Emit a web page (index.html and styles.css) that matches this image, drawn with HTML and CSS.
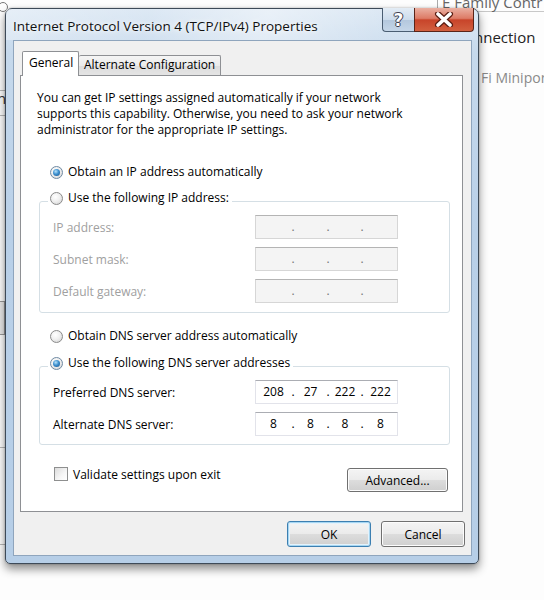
FILE: index.html
```html
<!DOCTYPE html>
<html lang="en">
<head>
    <meta charset="UTF-8">
    <title>Internet Protocol Version 4 (TCP/IPv4) Properties</title>
    <link rel="stylesheet" href="styles.css">
</head>
<body>
<div class="desktop">
    <div class="back-left">
        <span class="bl-c"></span>
        <span class="bl-line l1"></span>
        <span class="bl-txt">n</span>
        <span class="bl-line l2"></span>
        <span class="bl-box"></span>
        <span class="bl-line l3"></span>
        <span class="bl-line l4"></span>
    </div>
    <div class="back-right">
        <div class="bk-top">E Family Contr</div>
        <div class="bk-conn">nnection</div>
        <div class="bk-mini">Fi Minipor</div>
    </div>

    <div class="dialog">
        <div class="titlebar">
            <span class="title">Internet Protocol Version 4 (TCP/IPv4) Properties</span>
            <div class="caption-btns">
                <span class="cbtn help">?</span>
                <span class="cbtn close">
                    <svg width="20" height="15" viewBox="0 0 20 15">
                        <path d="M4 2 L16 13 M16 2 L4 13" stroke="#5a1d12" stroke-width="6" stroke-linecap="round"/>
                        <path d="M4 2 L16 13 M16 2 L4 13" stroke="#fff" stroke-width="3.6" stroke-linecap="round"/>
                    </svg>
                </span>
            </div>
        </div>

        <div class="client">
            <div class="tabs">
                <span class="tab active">General</span>
                <span class="tab">Alternate Configuration</span>
            </div>

            <div class="panel">
                <p class="intro">You can get IP settings assigned automatically if your network supports this capability. Otherwise, you need to ask your network administrator for the appropriate IP settings.</p>

                <div class="opt first"><span class="radio on"></span>Obtain an IP address automatically</div>

                <fieldset class="group off">
                    <legend class="opt"><span class="radio"></span>Use the following IP address:</legend>
                    <div class="field">
                        <span class="lbl">IP address:</span>
                        <span class="ip"><i class="s1"></i><b>.</b><i class="s2"></i><b>.</b><i class="s3"></i><b>.</b><i class="s4"></i></span>
                    </div>
                    <div class="field">
                        <span class="lbl">Subnet mask:</span>
                        <span class="ip"><i class="s1"></i><b>.</b><i class="s2"></i><b>.</b><i class="s3"></i><b>.</b><i class="s4"></i></span>
                    </div>
                    <div class="field">
                        <span class="lbl">Default gateway:</span>
                        <span class="ip"><i class="s1"></i><b>.</b><i class="s2"></i><b>.</b><i class="s3"></i><b>.</b><i class="s4"></i></span>
                    </div>
                </fieldset>

                <div class="opt dns-auto"><span class="radio"></span>Obtain DNS server address automatically</div>

                <fieldset class="group dns">
                    <legend class="opt"><span class="radio on"></span>Use the following DNS server addresses</legend>
                    <div class="field">
                        <span class="lbl">Preferred DNS server:</span>
                        <span class="ip"><i class="s1">208</i><b>.</b><i class="s2">27</i><b>.</b><i class="s3">222</i><b>.</b><i class="s4">222</i></span>
                    </div>
                    <div class="field">
                        <span class="lbl">Alternate DNS server:</span>
                        <span class="ip"><i class="s1">8</i><b>.</b><i class="s2">8</i><b>.</b><i class="s3">8</i><b>.</b><i class="s4">8</i></span>
                    </div>
                </fieldset>

                <div class="bottom-row">
                    <label class="check"><span class="box"></span>Validate settings upon exit</label>
                    <span class="btn advanced">Advanced...</span>
                </div>
            </div>

            <div class="footer">
                <span class="btn ok">OK</span>
                <span class="btn">Cancel</span>
            </div>
        </div>
    </div>
</div>
</body>
</html>
```

FILE: styles.css
```css
body {
    margin: 0;
    background: #fff;
    font-family: 'Open Sans', 'Noto Sans', sans-serif;
    font-size: 12px;
    color: #000;
}
.desktop {
    position: relative;
    width: 544px;
    height: 600px;
    overflow: hidden;
    background: #fdfdfd;
}

/* window behind the dialog */
.back-left {
    position: absolute;
    left: 0;
    top: 0;
    width: 10px;
    height: 600px;
}
.bl-c {
    display: block;
    width: 8px;
    height: 8px;
    margin: 2px 0 0 -2px;
    border: 1px solid #777;
    border-radius: 50%;
}
.bl-line {
    display: block;
    height: 1px;
    background: #b8b8b8;
}
.bl-line.l1 { margin-top: 78px; }
.bl-line.l2 { margin-top: 10px; }
.bl-line.l3 { margin-top: 112px; }
.bl-line.l4 { margin-top: 96px; }
.bl-txt {
    display: block;
    font-size: 15px;
    line-height: 14px;
    margin-left: -3px;
    color: #333;
}
.bl-box {
    display: block;
    margin-top: 185px;
    width: 4px;
    height: 32px;
    border: 1px solid #999;
    border-left: none;
    background: #e8e8e8;
}
.back-right {
    position: absolute;
    left: 437px;
    top: 0;
    width: 110px;
    height: 100px;
    font-size: 15px;
    color: #333;
}
.bk-top {
    margin-top: -6px;
    padding-left: 4px;
    height: 17px;
    line-height: 16px;
    border-left: 1px solid #aaa;
    border-bottom: 1px solid #c8c8c8;
    color: #666;
}
.bk-conn {
    margin-top: 15px;
    padding-left: 37px;
    line-height: 20px;
    color: #222;
}
.bk-mini {
    margin-top: 21px;
    padding-left: 44px;
    font-size: 14px;
    color: #8a8a8a;
}

/* dialog frame */
.dialog {
    position: absolute;
    left: 5px;
    top: 8px;
    width: 474px;
    height: 556px;
    box-sizing: border-box;
    border: 1px solid #3d4a58;
    border-radius: 7px 7px 5px 5px;
    background: linear-gradient(180deg, #d9e6f3 0%, #c6d9ec 8%, #b9d0e8 40%, #b6cee7 100%);
    box-shadow: 0 5px 10px rgba(0, 0, 0, 0.45), 0 0 2px rgba(0, 0, 0, 0.3);
    display: flex;
    flex-direction: column;
}
.titlebar {
    height: 31px;
    display: flex;
    align-items: flex-start;
    padding-left: 7px;
    background: linear-gradient(100deg, rgba(255,255,255,0.35) 0%, rgba(255,255,255,0.1) 30%, rgba(255,255,255,0.45) 55%, rgba(255,255,255,0.1) 80%);
}
.title {
    font-size: 13.5px;
    line-height: 20px;
    padding-top: 7px;
    color: #111;
    text-shadow: 0 0 8px #fff, 0 0 4px #fff;
}
.caption-btns {
    margin-left: auto;
    margin-right: 4px;
    margin-top: -1px;
    display: flex;
}
.cbtn {
    height: 24px;
    box-sizing: border-box;
    border: 1px solid #4a5d72;
    border-top: none;
    display: flex;
    align-items: center;
    justify-content: center;
}
.cbtn.help {
    width: 32px;
    border-radius: 0 0 0 4px;
    border-right: none;
    background: linear-gradient(180deg, #e3ecf5 0%, #cddcec 50%, #b3c7dd 51%, #c5d6e8 100%);
    font-family: 'DejaVu Sans', sans-serif;
    font-weight: bold;
    font-size: 17px;
    color: #fff;
    text-shadow: 0 0 1px #334, 1px 0 0 #445, -1px 0 0 #445, 0 1px 0 #445, 0 -1px 0 #445;
}
.cbtn.close {
    width: 60px;
    border-radius: 0 0 4px 0;
    border-color: #5a2418;
    background: linear-gradient(180deg, #eab0a2 0%, #dd7b66 45%, #c8442a 52%, #d2603f 100%);
}

/* client area */
.client {
    flex: 1;
    margin: 0 6px 7px 7px;
    border: 1px solid #8fa5bd;
    background: #f0f0f0;
    padding-left: 6px;
    display: flex;
    flex-direction: column;
}
.tabs {
    display: flex;
    align-items: flex-end;
    height: 23px;
    padding-top: 11px;
    padding-left: 2px;
    position: relative;
    z-index: 1;
}
.tab {
    height: 20px;
    box-sizing: border-box;
    line-height: 18px;
    padding: 0 5px;
    border: 1px solid #8e9094;
    border-bottom: none;
    border-left: none;
    background: linear-gradient(180deg, #f5f5f5 0%, #ebebeb 50%, #dddddd 51%, #e4e4e4 100%);
    border-radius: 2px 2px 0 0;
    color: #000;
}
.tab.active {
    width: 57px;
    height: 25px;
    margin-bottom: -1px;
    line-height: 22px;
    padding: 0 0 0 6px;
    border-left: 1px solid #8e9094;
    background: #fff;
}
.panel {
    width: 443px;
    height: 437px;
    box-sizing: border-box;
    border: 1px solid #8e9094;
    background: #fff;
    padding: 14px 14px 0 16px;
}
.intro {
    margin: 0;
    line-height: 16px;
    width: 385px;
}
.opt {
    display: flex;
    align-items: center;
    height: 20px;
    line-height: 20px;
    white-space: nowrap;
}
.opt.first {
    margin-top: 24px;
    margin-left: 13px;
}
.opt.dns-auto {
    margin-top: 13px;
    margin-left: 13px;
}
.radio {
    width: 13px;
    height: 13px;
    box-sizing: border-box;
    border-radius: 50%;
    border: 1px solid #8a8a8a;
    background: radial-gradient(circle at 40% 35%, #ffffff 0%, #f0f0f0 45%, #cfcfcf 100%);
    margin-right: 5px;
    display: flex;
    align-items: center;
    justify-content: center;
    flex: none;
}
.radio.on {
    border-color: #6f8aa3;
}
.radio.on::after {
    content: "";
    width: 7px;
    height: 7px;
    border-radius: 50%;
    background: radial-gradient(circle at 40% 35%, #b7e3fb 0%, #3d90cf 45%, #174f86 100%);
}

/* group boxes */
.group {
    margin: 6px 0 0 2px;
    width: 411px;
    box-sizing: border-box;
    min-inline-size: 0;
    border: 1px solid #d5dfe5;
    border-radius: 3px;
    padding: 1px 0 9px 13px;
    display: flex;
    flex-direction: column;
    gap: 8px;
}
.group legend {
    padding: 0 3px 6px 2px;
    margin-left: -5px;
    height: 26px;
    box-sizing: border-box;
}
.group.dns {
    margin-top: 7px;
    padding-bottom: 8px;
}
.field {
    display: flex;
    align-items: center;
    height: 24px;
}
.lbl {
    width: 202px;
}
.off .lbl {
    color: #a0a0a0;
}
.ip {
    display: flex;
    width: 143px;
    height: 24px;
    box-sizing: border-box;
    border: 1px solid #e2e3ea;
    border-top-color: #abadb3;
    background: #fff;
    line-height: 22px;
}
.off .ip {
    background: #f4f4f4;
    border-color: #d6d6d6;
    border-top-color: #b4b4b4;
}
.ip i {
    font-style: normal;
    text-align: center;
}
.ip b {
    font-weight: normal;
    width: 4px;
    text-align: center;
}
.off .ip b {
    color: #777;
}
.ip .s1 { width: 35px; }
.ip .s2 { width: 31px; }
.ip .s3 { width: 30px; }
.ip .s4 { width: 33px; }

/* bottom row */
.bottom-row {
    display: flex;
    justify-content: space-between;
    align-items: flex-start;
    margin-top: 21px;
    padding-left: 17px;
}
.check {
    display: flex;
    align-items: center;
    height: 16px;
}
.box {
    width: 14px;
    height: 14px;
    box-sizing: border-box;
    border: 1px solid #8e8f8f;
    background: linear-gradient(135deg, #dcdcdc 0%, #f6f6f6 60%, #ffffff 100%);
    margin-right: 5px;
}
.btn {
    width: 84px;
    height: 26px;
    box-sizing: border-box;
    border: 1px solid #707070;
    border-radius: 3px;
    background: linear-gradient(180deg, #f4f4f4 0%, #ebebeb 49%, #dddddd 50%, #cfcfcf 100%);
    box-shadow: inset 0 0 0 1px #fcfcfc;
    display: flex;
    align-items: center;
    justify-content: center;
    color: #000;
}
.btn.advanced {
    width: 101px;
    height: 24px;
    margin-top: 2px;
}
.btn.ok {
    border-color: #3c7fb1;
    box-shadow: inset 0 0 0 1px #a6d6f2, inset 0 0 0 2px #e4f2fb;
}
.footer {
    display: flex;
    justify-content: flex-end;
    gap: 10px;
    padding: 9px 6px 0 0;
}
```
